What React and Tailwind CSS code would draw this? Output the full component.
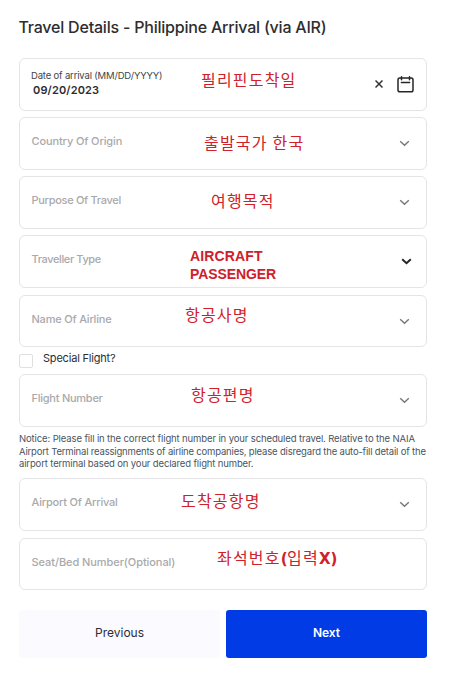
import React, { useState } from "react";

const ChevronIcon = ({ bold }) => (
  <svg
    className={bold ? "h-[7px] w-[11px] text-[#222222]" : "h-[7px] w-[11px] text-[#77777b]"}
    viewBox="0 0 11 7"
    fill="none"
    stroke="currentColor"
    strokeWidth={bold ? 1.9 : 1.4}
  >
    <path d="M1.2 1.2 5.5 5.3 9.8 1.2" />
  </svg>
);

const CloseIcon = () => (
  <svg className="h-2 w-2 text-[#333333]" viewBox="0 0 8 8" fill="none" stroke="currentColor" strokeWidth="1.5">
    <path d="M0.5 0.5 7.5 7.5M7.5 0.5 0.5 7.5" />
  </svg>
);

const CalendarIcon = () => (
  <svg
    className="h-[17px] w-[17px] text-[#262626]"
    viewBox="0 0 17 17"
    fill="none"
    stroke="currentColor"
    strokeWidth="1.5"
    strokeLinecap="round"
  >
    <rect x="1" y="2.1" width="15" height="13.6" rx="1.8" />
    <path d="M4.5 0.8V3.7M12.5 0.8V3.7M4.4 6.5H12.6" />
  </svg>
);

const Note = ({ className, children }) => (
  <span className={`absolute whitespace-nowrap text-[#d0202a] ${className}`}>{children}</span>
);

const KoreanNote = ({ className, children }) => (
  <Note
    className={`font-['Noto_Sans_CJK_KR',sans-serif] text-[16px] font-normal leading-6 tracking-[1.2px] ${className}`}
  >
    {children}
  </Note>
);

const SelectField = ({ label, labelClass, className, bold, arrow = true, children }) => (
  <div
    className={`relative flex items-center justify-between rounded-md border border-[#e4e4e6] pl-[11.5px] ${
      bold ? "pr-[14px]" : "pr-4"
    } ${className}`}
  >
    <span className={`-mt-[5px] whitespace-nowrap text-[11px] font-medium leading-4 text-[#a9a9ab] ${labelClass}`}>
      {label}
    </span>
    {arrow && <ChevronIcon bold={bold} />}
    {children}
  </div>
);

const App = () => {
  const [special, setSpecial] = useState(false);

  return (
    <main className="min-h-screen w-[453px] bg-white pl-[19px] pr-[26px] pt-4 font-['Inter',sans-serif] text-[#2d2d30]">
      <h1 className="-ml-[0.5px] h-[42px] whitespace-nowrap text-[16px] font-medium leading-[22px] tracking-[-0.21px]">
        Travel Details - Philippine Arrival (via AIR)
      </h1>

      <div className="relative flex h-[53px] items-center justify-between rounded-md border border-[#e4e4e6] pl-[11px] pr-3">
        <div className="-mt-[4px] flex flex-col">
          <span className="whitespace-nowrap text-[9.5px] leading-[15px] tracking-[-0.17px] text-[#444447]">
            Date of arrival (MM/DD/YYYY)
          </span>
          <span className="pl-[2px] text-[11px] font-semibold leading-[15px] tracking-[0.15px]">09/20/2023</span>
        </div>
        <div className="-mt-[1px] flex items-center gap-[14px]">
          <CloseIcon />
          <CalendarIcon />
        </div>
        <KoreanNote className="left-[181px] top-[8px]">필리핀도착일</KoreanNote>
      </div>

      <SelectField label="Country Of Origin" labelClass="tracking-[-0.12px]" className="mt-[6px] h-[53px]">
        <KoreanNote className="left-[184px] top-[12px]">출발국가 한국</KoreanNote>
      </SelectField>

      <SelectField label="Purpose Of Travel" labelClass="tracking-[-0.3px]" className="mt-[6px] h-[53px]">
        <KoreanNote className="left-[191px] top-[11px]">여행목적</KoreanNote>
      </SelectField>

      <SelectField label="Traveller Type" labelClass="tracking-[-0.38px]" className="mt-[6px] h-[53px]" bold>
        <Note className="left-[170px] top-[11px] font-['Liberation_Sans',sans-serif] text-[14px] font-bold leading-[18px] tracking-[0.15px]">
          AIRCRAFT
          <br />
          <span className="tracking-[-0.1px]">PASSENGER</span>
        </Note>
      </SelectField>

      <SelectField label="Name Of Airline" labelClass="tracking-[-0.2px]" className="mt-[7px] h-[52px]">
        <KoreanNote className="left-[165px] top-[6px]">항공사명</KoreanNote>
      </SelectField>

      <label className="flex h-[27px] items-start">
        <input
          type="checkbox"
          checked={special}
          onChange={(e) => setSpecial(e.target.checked)}
          className="mt-[7px] h-[14px] w-[14px] appearance-none rounded-[2px] border border-[#e0e0e2] checked:bg-[#003be6]"
        />
        <span className="ml-[10px] mt-[3px] text-[11px] leading-4 tracking-[-0.2px]">Special Flight?</span>
      </label>

      <SelectField label="Flight Number" labelClass="tracking-[-0.25px]" className="h-[53px]">
        <KoreanNote className="left-[171px] top-[7px]">항공편명</KoreanNote>
      </SelectField>

      <p className="h-[51px] whitespace-nowrap pt-[6px] text-[9.5px] leading-[12.6px] text-[#4a5561]">
        <span className="block tracking-[-0.12px]">
          Notice: Please fill in the correct flight number in your scheduled travel. Relative to the NAIA
        </span>
        <span className="block tracking-[-0.18px]">
          Airport Terminal reassignments of airline companies, please disregard the auto-fill detail of the
        </span>
        <span className="block tracking-[-0.14px]">airport terminal based on your declared flight number.</span>
      </p>

      <SelectField label="Airport Of Arrival" labelClass="tracking-[-0.2px]" className="h-[53px]">
        <KoreanNote className="left-[161px] top-[9px]">도착공항명</KoreanNote>
      </SelectField>

      <SelectField
        label="Seat/Bed Number(Optional)"
        labelClass="tracking-[-0.07px]"
        className="mt-[7px] h-[52px]"
        arrow={false}
      >
        <KoreanNote className="left-[197px] top-[6px]">
          좌석번호<b className="font-['DejaVu_Sans',sans-serif] text-[15px] tracking-[-0.5px]">(</b>입력
          <b className="font-['DejaVu_Sans',sans-serif] text-[15px] tracking-normal">X)</b>
        </KoreanNote>
      </SelectField>

      <div className="mt-5 flex gap-[6px]">
        <button className="h-12 w-[201px] rounded-[3px] bg-[#fafaff] pb-[2px] text-[12px]">Previous</button>
        <button className="h-12 w-[201px] rounded-[3px] bg-[#003be6] pb-[2px] text-[12px] font-semibold text-white">
          Next
        </button>
      </div>
    </main>
  );
};

export default App;
